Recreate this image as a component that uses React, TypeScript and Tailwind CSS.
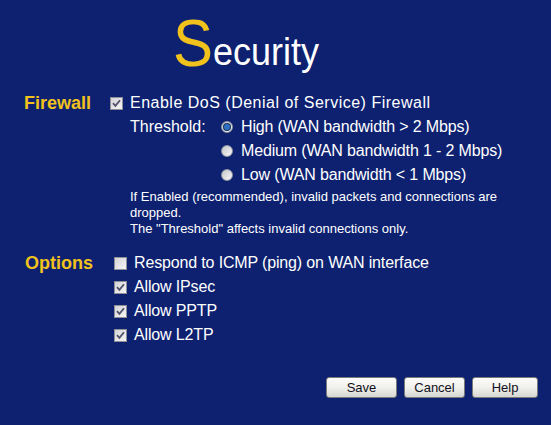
import React from 'react';

// Router-style "Security" page: firewall + options, flat navy background.

const FONT = "font-['Liberation_Sans',Arial,sans-serif]";

function Check({ checked }: { checked: boolean }) {
  return (
    <span className="w-[13px] h-[13px] shrink-0 border border-[#8f8f98] bg-gradient-to-br from-[#d4d4d8] to-[#f6f6f6] flex items-center justify-center">
      {checked && (
        <svg width="9" height="9" viewBox="0 0 9 9">
          <path d="M1 4.2 L3.4 6.8 L8 1.2" fill="none" stroke="#52526a" strokeWidth="1.8" />
        </svg>
      )}
    </span>
  );
}

function Radio({ on }: { on: boolean }) {
  return (
    <span className="w-[12px] h-[12px] shrink-0 rounded-full border border-[#8f96a4] bg-gradient-to-br from-[#c8c8cc] to-[#f8f8f8] flex items-center justify-center">
      {on && <span className="w-[6px] h-[6px] rounded-full bg-[#2f70c0] ring-1 ring-[#16345e]" />}
    </span>
  );
}

function Btn({ label, w }: { label: string; w: string }) {
  return (
    <button
      className={`${w} h-[21px] rounded-[3px] border border-[#7a7a7a] bg-gradient-to-b from-[#fcfcfa] via-[#f0f0ec] to-[#d6d6d2] text-[13px] text-[#101020] leading-none`}
    >
      {label}
    </button>
  );
}

const thresholds = [
  { label: 'High (WAN bandwidth > 2 Mbps)', on: true },
  { label: 'Medium (WAN bandwidth 1 - 2 Mbps)', on: false },
  { label: 'Low (WAN bandwidth < 1 Mbps)', on: false },
];

const options = [
  { label: 'Respond to ICMP (ping) on WAN interface', on: false },
  { label: 'Allow IPsec', on: true },
  { label: 'Allow PPTP', on: true },
  { label: 'Allow L2TP', on: true },
];

export default function App() {
  return (
    <div className={`w-[551px] h-[425px] bg-[#0d2170] text-white ${FONT} overflow-hidden`}>
      {/* title */}
      <div className="h-[91px] pl-[173px] pt-[6px]">
        <div className="flex items-baseline h-[80px]">
          <span className="text-[60px] leading-[80px] text-[#f2c21c] inline-block scale-y-[1.1] origin-[50%_75%]">S</span>
          <span className="text-[36px] leading-[80px] inline-block scale-y-[1.1] origin-[50%_75%]">ecurity</span>
        </div>
      </div>

      {/* firewall */}
      <div className="flex">
        <div className="w-[110px] pl-[24px] h-[24px] flex items-center text-[18px] font-bold text-[#f2c21c]">
          Firewall
        </div>
        <div className="flex flex-col text-[16px]">
          <div className="h-[24px] flex items-center gap-[7px]">
            <Check checked />
            <span className="tracking-[0.5px]">Enable DoS (Denial of Service) Firewall</span>
          </div>
          <div className="flex pl-[20px]">
            <div className="w-[91px] h-[24px] flex items-center">Threshold:</div>
            <div className="flex flex-col">
              {thresholds.map((t) => (
                <div key={t.label} className="h-[24px] flex items-center gap-[8px]">
                  <Radio on={t.on} />
                  <span className="tracking-[-0.15px]">{t.label}</span>
                </div>
              ))}
            </div>
          </div>
          <p className="pl-[20px] pt-[2px] w-[400px] text-[13px] leading-[16px]">
            If Enabled (recommended), invalid packets and connections are dropped.
            <br />
            The "Threshold" affects invalid connections only.
          </p>
        </div>
      </div>

      {/* options */}
      <div className="flex mt-[14px]">
        <div className="w-[114px] pl-[25px] h-[24px] flex items-center text-[18px] font-bold text-[#f2c21c]">
          Options
        </div>
        <div className="flex flex-col text-[16px]">
          {options.map((o) => (
            <div key={o.label} className="h-[24px] flex items-center gap-[7px]">
              <Check checked={o.on} />
              <span className="tracking-[-0.15px]">{o.label}</span>
            </div>
          ))}
        </div>
      </div>

      {/* buttons */}
      <div className="mt-[30px] pl-[326px] flex gap-[7px]">
        <Btn label="Save" w="w-[71px]" />
        <Btn label="Cancel" w="w-[61px]" />
        <Btn label="Help" w="w-[66px]" />
      </div>
    </div>
  );
}
